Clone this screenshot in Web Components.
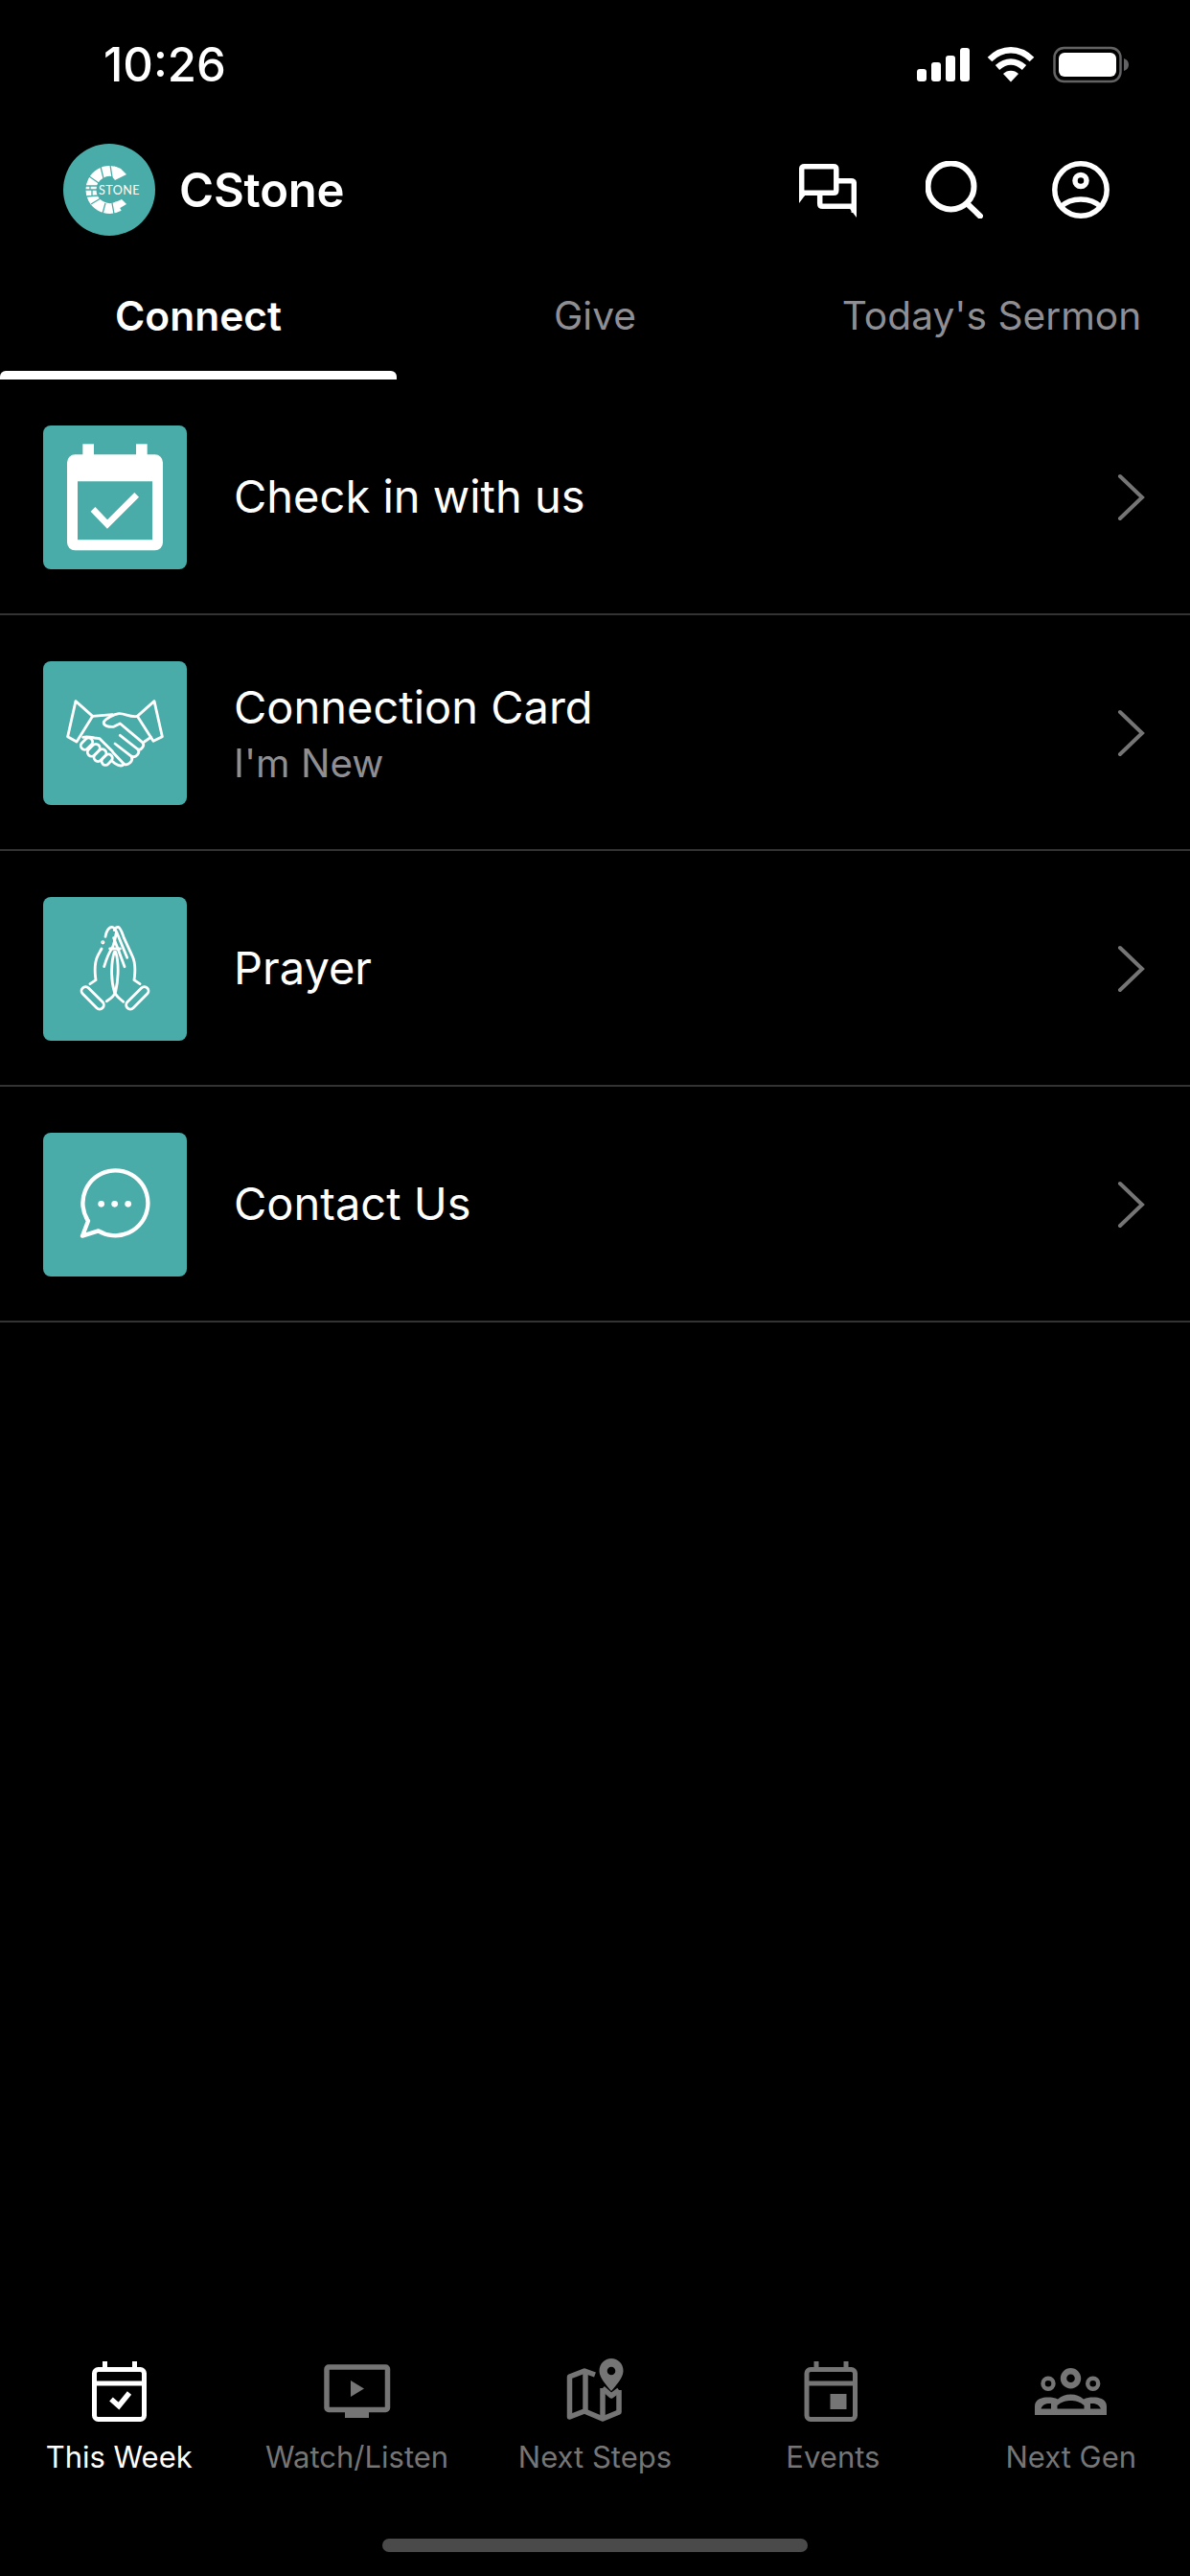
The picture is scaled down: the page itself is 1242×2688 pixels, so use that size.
<!DOCTYPE html>
<html>
<head>
<meta charset="UTF-8">
<title>CStone</title>
<style>
  html, body { margin: 0; background: #000; }
</style>
</head>
<body>

<app-screen>
  <status-bar></status-bar>
  <app-header></app-header>
  <tab-strip>
    <tab-item active>Connect</tab-item>
    <tab-item>Give</tab-item>
    <tab-item>Today's Sermon</tab-item>
  </tab-strip>
  <list-row icon="calendar" title="Check in with us"></list-row>
  <list-row icon="handshake" title="Connection Card" sub="I'm New"></list-row>
  <list-row icon="prayer" title="Prayer"></list-row>
  <list-row icon="bubble" title="Contact Us"></list-row>
  <bottom-nav>
    <nav-item icon="week" active>This Week</nav-item>
    <nav-item icon="watch">Watch/Listen</nav-item>
    <nav-item icon="steps">Next Steps</nav-item>
    <nav-item icon="events">Events</nav-item>
    <nav-item icon="gen">Next Gen</nav-item>
  </bottom-nav>
</app-screen>

<script>
const FONT = `Inter, "Liberation Sans", sans-serif`;

// tile icons: drawn in zoomed coordinates, so viewBox sits on the tile
const TILE_ICONS = {
  calendar: `<svg viewBox="75 72 450 450" width="150" height="150">
      <rect x="199" y="130" width="35" height="50" fill="#fff"/>
      <rect x="366" y="130" width="35" height="50" fill="#fff"/>
      <path fill="#fff" fill-rule="evenodd" d="M175 163H425A25 25 0 0 1 450 188V438A25 25 0 0 1 425 463H175A25 25 0 0 1 150 438V188A25 25 0 0 1 175 163ZM183 247V430H417V247Z"/>
      <path d="M231 334L276 381L368 289" fill="none" stroke="#fff" stroke-width="20"/>
    </svg>`,
  handshake: `<svg viewBox="75 60 450 450" width="150" height="150" fill="none" stroke="#fff" stroke-width="8.5" stroke-linejoin="round" stroke-linecap="round">
      <path d="M177 185L230 232L180 312L152 296Z"/>
      <path d="M423 185L370 232L420 310L448 296Z"/>
      <path d="M230 232L292 227"/>
      <path d="M200 298C212 294 226 298 236 300L252 302L292 342"/>
      <path d="M392 312L412 298"/>
      <path d="M370 232C350 238 330 222 312 224C298 226 272 238 265 250C262 263 282 266 296 265L316 255L386 314C394 322 384 340 372 336L316 292"/>
      <path d="M372 336C380 346 366 364 352 358L300 318"/>
      <path d="M352 358C358 372 342 388 328 382L294 346"/>
      <path d="M328 382C322 390 312 388 300 380L290 372"/>
      <g fill="#4aaca8">
        <rect x="190" y="306" width="42" height="25" rx="12.5" transform="rotate(-45 211 318)"/>
        <rect x="211" y="326" width="44" height="25" rx="12.5" transform="rotate(-45 233 338)"/>
        <rect x="231" y="342" width="44" height="25" rx="12.5" transform="rotate(-45 253 354)"/>
        <rect x="256" y="356" width="38" height="24" rx="12" transform="rotate(-45 275 368)"/>
      </g>
    </svg>`,
  prayer: `<svg viewBox="75 78 450 450" width="150" height="150" fill="none" stroke="#fff" stroke-width="8.5" stroke-linejoin="round" stroke-linecap="round">
      <g transform="rotate(45 230 394)"><rect x="186" y="381" width="88" height="26" rx="13"/></g>
      <g transform="rotate(-45 370 394)"><rect x="326" y="381" width="88" height="26" rx="13"/></g>
      <path d="M222 350L240 338C236 310 236 282 246 262C250 254 254 248 258 240"/>
      <path d="M378 350L360 338C364 310 364 282 354 262L328 206C322 190 318 174 310 172C304 172 300 176 298 182"/>
      <path d="M270 202C272 188 280 172 290 172C298 172 302 180 306 190L338 268"/>
      <path d="M266 296C272 276 280 254 290 240C296 230 302 202 304 190"/>
      <path d="M296 206L310 242L330 296"/>
      <path d="M284 240H316"/>
      <path d="M298 250C288 280 286 336 298 374C304 390 318 398 326 406"/>
      <path d="M302 250C312 280 312 330 302 374C298 388 284 398 274 404"/>
      <circle cx="262" cy="220" r="2" fill="#fff"/>
    </svg>`,
  bubble: `<svg viewBox="75 66 450 450" width="150" height="150" fill="none" stroke="#fff" stroke-width="13" stroke-linejoin="round">
      <path d="M248 373A102 102 0 1 0 216 342L198 389Z"/>
      <g fill="#fff" stroke="none">
        <circle cx="257" cy="289" r="10"/><circle cx="299" cy="289" r="10"/><circle cx="341" cy="289" r="10"/>
      </g>
    </svg>`
};

// bottom bar icons, drawn in page coordinates of the reference
const NAV_ICONS = {
  week: `<svg viewBox="90 2460 68 70" width="68" height="70" fill="none" stroke="currentColor" stroke-width="5">
      <rect x="98.5" y="2472.5" width="52" height="52" rx="4"/>
      <path d="M98.5 2487H150.5"/>
      <path d="M109.5 2464V2473M140.5 2464V2473"/>
      <path d="M116 2503.5L124 2510.5L135 2497" stroke-width="5.5"/>
    </svg>`,
  watch: `<svg viewBox="334 2460 78 70" width="78" height="70" fill="none" stroke="currentColor" stroke-width="5.5">
      <rect x="341" y="2470" width="63.5" height="44.5" rx="2"/>
      <rect x="360" y="2516" width="25" height="7" fill="currentColor" stroke="none"/>
      <path d="M366 2484L380 2492.5L366 2501Z" fill="currentColor" stroke="none"/>
    </svg>`,
  steps: `<svg viewBox="588 2458 68 72" width="68" height="72" fill="none" stroke="currentColor" stroke-width="5.5" stroke-linejoin="round">
      <path d="M622 2478L611 2474L595.5 2480V2522L611 2516L630 2524L647 2517V2494"/>
      <path d="M612 2474V2516"/>
      <path d="M630 2492L639 2500L647 2494"/>
      <path d="M630 2492V2524"/>
      <path fill="currentColor" stroke="none" fill-rule="evenodd" d="M639 2461C646 2461 651.5 2466.5 651.5 2474C651.5 2481 644 2489 639 2495C634 2489 626.5 2481 626.5 2474C626.5 2466.5 632 2461 639 2461ZM639 2469.7A4.3 4.3 0 1 0 639 2478.3A4.3 4.3 0 1 0 639 2469.7Z"/>
    </svg>`,
  events: `<svg viewBox="835.5 2460 68 70" width="68" height="70" fill="none" stroke="currentColor" stroke-width="5">
      <rect x="842.5" y="2472.5" width="50.5" height="52" rx="4"/>
      <path d="M842.5 2487H893"/>
      <path d="M852.5 2464V2473M883.5 2464V2473"/>
      <rect x="867" y="2498" width="17" height="16" fill="currentColor" stroke="none"/>
    </svg>`,
  gen: `<svg viewBox="1076 2470 84 60" width="84" height="60" fill="none" stroke="currentColor">
      <circle cx="1117.5" cy="2481.7" r="7.5" stroke-width="6.4"/>
      <circle cx="1094" cy="2487.3" r="5.5" stroke-width="4.4"/>
      <circle cx="1140.7" cy="2487.3" r="5.5" stroke-width="4.4"/>
      <path fill="currentColor" stroke="none" fill-rule="evenodd" d="M1080 2520V2511C1080 2503 1088 2501.5 1094 2501.5C1098 2501.5 1101 2502 1104 2503.5C1108 2500 1112 2498.5 1117.5 2498.5C1123 2498.5 1127 2500 1131 2503.5C1134 2502 1137 2501.5 1141 2501.5C1147 2501.5 1155 2503 1155 2511V2520ZM1086.5 2513.5H1097V2508C1092 2507.5 1088 2509 1086.5 2513.5ZM1103.5 2513.5H1131.5V2510C1127 2506 1122 2505 1117.5 2505C1113 2505 1108 2506 1103.5 2510ZM1138 2513.5H1149C1147 2509 1143 2507.5 1138 2508Z"/>
    </svg>`
};

class AppScreen extends HTMLElement {
  constructor() {
    super();
    this.attachShadow({ mode: "open" });
    this.shadowRoot.innerHTML = `
      <style>
        :host { display: flex; flex-direction: column; width: 1242px; height: 2688px; background: #000; color: #fff; font-family: ${FONT}; overflow: hidden; }
      </style>
      <slot></slot>
    `;
  }
}

class StatusBar extends HTMLElement {
  constructor() {
    super();
    this.attachShadow({ mode: "open" });
    this.shadowRoot.innerHTML = `
      <style>
        :host { display: flex; justify-content: space-between; align-items: center; height: 136px; padding: 0 56px 0 108px; box-sizing: border-box; }
        .time { font-size: 49px; font-weight: 500; line-height: 136px; }
        .icons { display: flex; align-items: center; height: 136px; }
        svg { display: block; }
      </style>
      <span class="time">10:26</span>
      <div class="icons">
        <svg viewBox="950 40 236 56" width="236" height="56">
          <rect x="957" y="72" width="10" height="13" rx="3" fill="#fff"/>
          <rect x="972" y="65" width="10" height="20" rx="3" fill="#fff"/>
          <rect x="987" y="58" width="10" height="27" rx="3" fill="#fff"/>
          <rect x="1002" y="50" width="10" height="35" rx="3" fill="#fff"/>
          <path d="M1033 62C1046 49 1064 49 1077 62" fill="none" stroke="#fff" stroke-width="6.5"/>
          <path d="M1041 70.5C1050 62.5 1060 62.5 1069 70.5" fill="none" stroke="#fff" stroke-width="6.5"/>
          <path d="M1047 77C1051 72.5 1059 72.5 1063 77L1055 85.5Z" fill="#fff"/>
          <rect x="1100.5" y="50" width="69" height="35" rx="10" fill="none" stroke="#636366" stroke-width="2.5"/>
          <rect x="1105" y="55" width="60" height="25" rx="6" fill="#fff"/>
          <path d="M1173 61C1176 62 1178 64 1178 67.5C1178 71 1176 73 1173 74Z" fill="#636366"/>
        </svg>
      </div>
    `;
  }
}

class AppHeader extends HTMLElement {
  constructor() {
    super();
    this.attachShadow({ mode: "open" });
    this.shadowRoot.innerHTML = `
      <style>
        :host { display: flex; align-items: center; height: 124px; padding: 0 84px 0 66px; box-sizing: border-box; }
        .logo { width: 96px; height: 96px; flex: none; display: block; }
        .name { font-size: 49px; font-weight: 600; margin-left: 25px; flex: 1; letter-spacing: -0.2px; }
        .actions { display: flex; align-items: center; gap: 72px; }
        .actions svg { display: block; width: 60px; height: 60px; }
      </style>
      <svg class="logo" viewBox="0 0 96 96">
        <circle cx="48" cy="48" r="48" fill="#4aaca8"/>
        <path d="M58 31A19.5 19.5 0 1 0 58 65" fill="none" stroke="#fff" stroke-width="11"/>
        <path d="M53 23.5L61 27L66 32L54 38L50 33Z" fill="#fff"/>
        <path d="M61 58L66 63L56 69L47 72L50 63Z" fill="#fff"/>
        <g fill="none" stroke="#4aaca8" stroke-width="1.3">
          <path d="M49 22L51 35M39 24L42 36M27 34L37 41M23 44H36M23 48H36M28 44V48M30 48V54M24 55L37 54M29 63L39 57M41 73L44 62M53 73L51 62"/>
        </g>
        <text x="37" y="52.5" font-family="Lato, sans-serif" font-size="12.6" letter-spacing="0.4" fill="#fff">STONE</text>
      </svg>
      <span class="name">CStone</span>
      <div class="actions">
        <svg viewBox="834 168 60 60" fill="none" stroke="#fff" stroke-width="5.5" stroke-linejoin="round">
          <path d="M836.7 205V176.5Q836.7 173.7 839.5 173.7H870Q872.8 173.7 872.8 176.5V198.5Q872.8 201.3 870 201.3H838"/>
          <path d="M834 212V200H843Z" fill="#fff" stroke="none"/>
          <path d="M873 188.7H888.5Q891.3 188.7 891.3 191.5V222"/>
          <path d="M855.7 202V212.5Q855.7 215.3 858.5 215.3H889"/>
          <path d="M894 227V214H884Z" fill="#fff" stroke="none"/>
        </svg>
        <svg viewBox="966 168 60 60" fill="none" stroke="#fff" stroke-width="6" stroke-linecap="round">
          <circle cx="992.5" cy="194.5" r="24"/>
          <path d="M1010 213L1023 225.5"/>
        </svg>
        <svg viewBox="1098 168 60 60" fill="none" stroke="#fff" stroke-width="5.5">
          <circle cx="1128" cy="198" r="27.2"/>
          <circle cx="1128" cy="188.5" r="6"/>
          <path d="M1107 216C1113 210 1120 208 1128 208C1136 208 1143 210 1149 216"/>
        </svg>
      </div>
    `;
  }
}

class TabStrip extends HTMLElement {
  constructor() {
    super();
    this.attachShadow({ mode: "open" });
    this.shadowRoot.innerHTML = `
      <style>
        :host { display: grid; grid-template-columns: repeat(3, 414px); height: 136px; }
      </style>
      <slot></slot>
    `;
  }
}

class TabItem extends HTMLElement {
  constructor() {
    super();
    this.attachShadow({ mode: "open" });
    this.shadowRoot.innerHTML = `
      <style>
        :host { display: block; box-sizing: border-box; position: relative; text-align: center; font-size: 40.7px; line-height: 48px; padding-top: 46px; color: #8e8e93; }
        :host([active]) { color: #fff; font-weight: 600; font-size: 42.5px; }
        :host([active])::after { content: ""; position: absolute; left: 0; right: 0; bottom: 0; height: 9px; background: #fff; border-radius: 6px 6px 0 0; }
      </style>
      <slot></slot>
    `;
  }
}

class ListRow extends HTMLElement {
  constructor() {
    super();
    this.attachShadow({ mode: "open" });
    const sub = this.getAttribute("sub");
    this.shadowRoot.innerHTML = `
      <style>
        :host { display: flex; align-items: center; box-sizing: border-box; height: 246px; padding: 2px 46px 0 45px; border-bottom: 2px solid #333; }
        .tile { flex: none; width: 150px; height: 150px; border-radius: 8px; background: #4aaca8; overflow: hidden; }
        .tile svg { display: block; }
        .text { flex: 1; margin-left: 49px; }
        .text.single { padding-bottom: 3px; }
        .title { font-size: 47px; line-height: 56px; color: #fff; }
        .sub { font-size: 40.5px; line-height: 46px; margin-top: 8px; color: #8e8e93; }
        .chev { display: block; flex: none; }
      </style>
      <div class="tile">${TILE_ICONS[this.getAttribute("icon")]}</div>
      <div class="text ${sub ? "" : "single"}">
        <div class="title">${this.getAttribute("title")}</div>
        ${sub ? `<div class="sub">${sub}</div>` : ""}
      </div>
      <svg class="chev" width="30" height="50" viewBox="0 0 30 50" fill="none" stroke="#757575" stroke-width="4" stroke-linecap="round"><path d="M3 3L26 25L3 47"/></svg>
    `;
  }
}

class BottomNav extends HTMLElement {
  constructor() {
    super();
    this.attachShadow({ mode: "open" });
    this.shadowRoot.innerHTML = `
      <style>
        :host { display: flex; flex-direction: column; margin-top: auto; height: 234px; box-sizing: border-box; }
        .items { display: grid; grid-template-columns: repeat(5, 1fr); }
        .home { width: 444px; height: 14px; border-radius: 7px; background: #4a4a4a; margin: auto auto 25px; }
      </style>
      <div class="items"><slot></slot></div>
      <div class="home"></div>
    `;
  }
}

class NavItem extends HTMLElement {
  constructor() {
    super();
    this.attachShadow({ mode: "open" });
    this.shadowRoot.innerHTML = `
      <style>
        :host { display: flex; flex-direction: column; align-items: center; color: #757575; font-size: 31px; }
        :host([active]) { color: #fff; }
        .ic { height: 76px; display: flex; align-items: flex-end; }
        .ic svg { display: block; }
        .label { line-height: 38px; margin-top: 15px; white-space: nowrap; }
      </style>
      <div class="ic">${NAV_ICONS[this.getAttribute("icon")]}</div>
      <div class="label"><slot></slot></div>
    `;
  }
}

customElements.define("app-screen", AppScreen);
customElements.define("status-bar", StatusBar);
customElements.define("app-header", AppHeader);
customElements.define("tab-strip", TabStrip);
customElements.define("tab-item", TabItem);
customElements.define("list-row", ListRow);
customElements.define("bottom-nav", BottomNav);
customElements.define("nav-item", NavItem);
</script>

</body>
</html>
